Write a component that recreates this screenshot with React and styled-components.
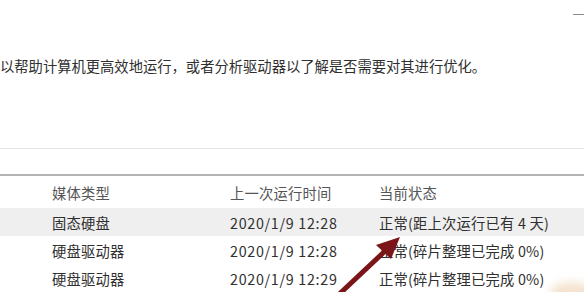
import React from "react";
import styled, { createGlobalStyle } from "styled-components";

const drives = [
  { type: "固态硬盘", last: "2020/1/9 12:28", status: "正常(距上次运行已有 4 天)", active: true },
  { type: "硬盘驱动器", last: "2020/1/9 12:28", status: "正常(碎片整理已完成 0%)" },
  { type: "硬盘驱动器", last: "2020/1/9 12:29", status: "正常(碎片整理已完成 0%)" },
];

export default function App() {
  return (
    <Window>
      <GlobalStyle />
      <TitleBar>
        <Minimize />
      </TitleBar>
      <Description>
        以帮助计算机更高效地运行，或者分析驱动器以了解是否需要对其进行优化。
      </Description>
      <Divider />
      <Spacer />
      <Table>
        <HeaderRow>
          <Cell>媒体类型</Cell>
          <Cell>上一次运行时间</Cell>
          <Cell>当前状态</Cell>
        </HeaderRow>
        {drives.map((d, i) => (
          <Row key={i} $active={d.active}>
            <Cell>{d.type}</Cell>
            <Cell $spaced>{d.last}</Cell>
            <Cell>{d.status}</Cell>
          </Row>
        ))}
      </Table>
      <Arrow viewBox="0 0 584 292" width="584" height="292">
        <line x1="333" y1="300" x2="384" y2="252" stroke="#7b1518" strokeWidth="5" strokeLinecap="round" />
        <polygon points="400,237 391,259 376,245" fill="#7b1518" />
      </Arrow>
      <Glow />
    </Window>
  );
}

const GlobalStyle = createGlobalStyle`
  html, body {
    margin: 0;
    padding: 0;
    background: #ffffff;
    overflow: hidden;
  }
  body {
    font-family: "Noto Sans CJK SC", "Noto Sans", sans-serif;
  }
`;

const Window = styled.div`
  position: relative;
  width: 584px;
  height: 292px;
  overflow: hidden;
  background: #ffffff;
  display: flex;
  flex-direction: column;
`;

const TitleBar = styled.div`
  height: 32px;
  display: flex;
  justify-content: flex-end;
  align-items: center;
`;

const Minimize = styled.div`
  width: 11px;
  height: 1px;
  background: #8a8a8a;
`;

const Description = styled.div`
  margin-top: 28px;
  font-size: 14.3px;
  line-height: 20px;
  color: #2f2f2f;
  white-space: nowrap;
`;

const Divider = styled.div`
  margin-top: 72px;
  height: 1px;
  background: #e3e3e3;
`;

const Spacer = styled.div`
  height: 28px;
  border-bottom: 2px solid #b4b4b4;
`;

const Table = styled.div`
  display: flex;
  flex-direction: column;
`;

const HeaderRow = styled.div`
  display: grid;
  grid-template-columns: 178px 149px 1fr;
  padding-left: 52px;
  height: 32px;
  align-items: center;
  color: #555555;
  font-size: 14.3px;
`;

const Row = styled.div`
  display: grid;
  grid-template-columns: 178px 149px 1fr;
  padding-left: 52px;
  height: 28px;
  align-items: center;
  color: #2f2f2f;
  font-size: 14.3px;
  background: ${(p) => (p.$active ? "#efefef" : "transparent")};
`;

const Cell = styled.div`
  white-space: nowrap;
  letter-spacing: ${(p) => (p.$spaced ? "0.7px" : "0.2px")};
`;

const Arrow = styled.svg`
  position: absolute;
  left: 0;
  top: 0;
  pointer-events: none;
`;

const Glow = styled.div`
  position: absolute;
  right: -10px;
  bottom: -12px;
  width: 44px;
  height: 22px;
  border-radius: 50%;
  background: #f1dcc4;
  filter: blur(4px);
  opacity: 0.8;
`;
